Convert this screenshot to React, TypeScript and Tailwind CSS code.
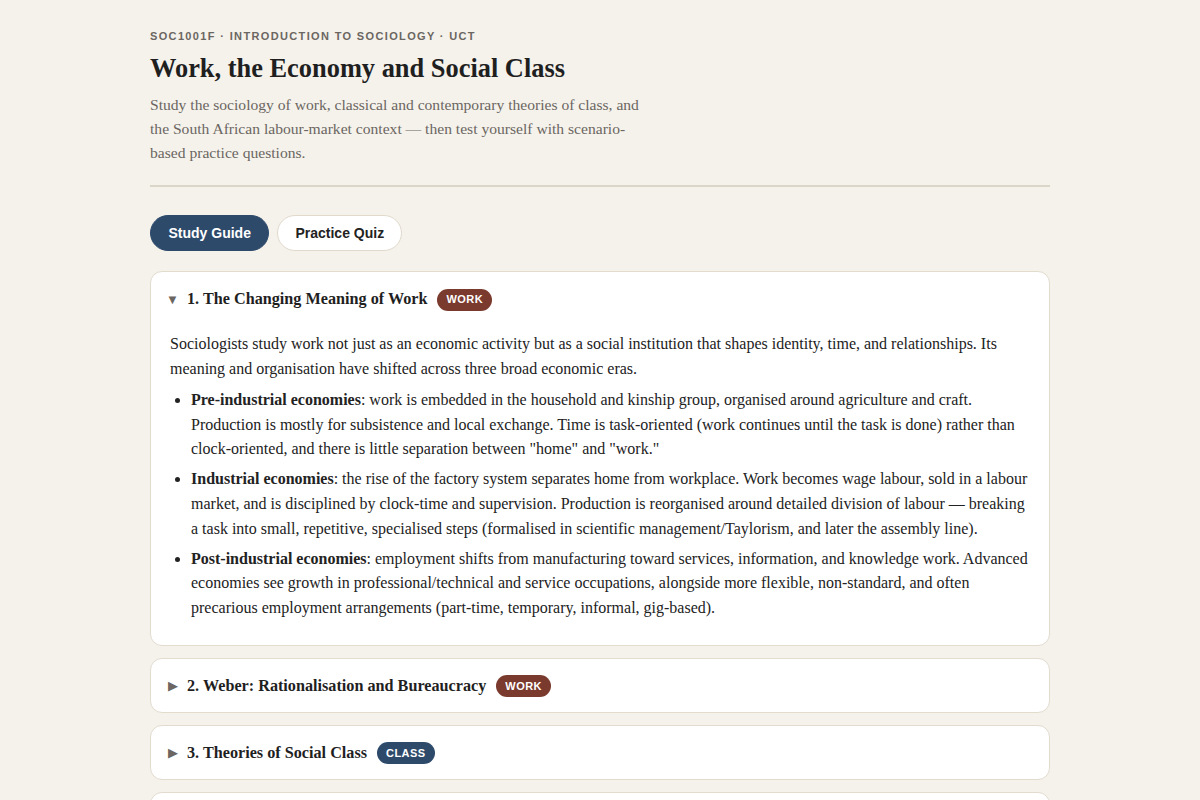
import { useState } from 'react';

type Section = {
  id: number;
  title: string;
  tag: 'WORK' | 'CLASS';
};

const sections: Section[] = [
  { id: 1, title: 'The Changing Meaning of Work', tag: 'WORK' },
  { id: 2, title: 'Weber: Rationalisation and Bureaucracy', tag: 'WORK' },
  { id: 3, title: 'Theories of Social Class', tag: 'CLASS' },
  { id: 4, title: 'Class in South Africa', tag: 'CLASS' },
];

function Tag({ tag }: { tag: Section['tag'] }) {
  const color = tag === 'WORK' ? 'bg-[#7a3a2d]' : 'bg-[#2d4a6b]';
  return (
    <span
      className={`${color} text-white text-[11px] font-bold tracking-[0.04em] px-[9px] h-[22px] inline-flex items-center rounded-full font-['Liberation_Sans',Arial,sans-serif]`}
    >
      {tag}
    </span>
  );
}

function SectionOne() {
  return (
    <div className="px-[19px] pb-[24px] pt-[7px] text-[16px] leading-[24.6px] text-[#222]">
      <p>
        Sociologists study work not just as an economic activity but as a social institution that shapes identity,
        time, and relationships. Its meaning and organisation have shifted across three broad economic eras.
      </p>
      <ul className="list-disc pl-[21px] mt-[7px] space-y-[5.5px] marker:text-[#222]">
        <li>
          <strong>Pre-industrial economies</strong>: work is embedded in the household and kinship group, organised
          around agriculture and craft. Production is mostly for subsistence and local exchange. Time is task-oriented
          (work continues until the task is done) rather than clock-oriented, and there is little separation between
          "home" and "work."
        </li>
        <li>
          <strong>Industrial economies</strong>: the rise of the factory system separates home from workplace. Work
          becomes wage labour, sold in a labour market, and is disciplined by clock-time and supervision. Production is
          reorganised around detailed division of labour — breaking a task into small, repetitive, specialised steps
          (formalised in scientific management/Taylorism, and later the assembly line).
        </li>
        <li>
          <strong>Post-industrial economies</strong>: employment shifts from manufacturing toward services,
          information, and knowledge work. Advanced economies see growth in professional/technical and service
          occupations, alongside more flexible, non-standard, and often precarious employment arrangements (part-time,
          temporary, informal, gig-based).
        </li>
      </ul>
    </div>
  );
}

export default function App() {
  const [tab, setTab] = useState<'guide' | 'quiz'>('guide');
  const [open, setOpen] = useState<number[]>([1]);

  function toggle(id: number) {
    setOpen((prev) => (prev.includes(id) ? prev.filter((x) => x !== id) : [...prev, id]));
  }

  return (
    <div className="min-h-screen bg-[#f5f2ec] font-['Liberation_Serif','Times_New_Roman',serif] text-[#222]">
      <div className="w-[900px] mx-auto pt-[29px] pb-10">
        <header className="pb-5 border-b-2 border-[#dcd5c9]">
          <div className="text-[11px] leading-[14px] font-bold tracking-[0.123em] text-[#6b6661] font-['Liberation_Sans',Arial,sans-serif]">
            SOC1001F · INTRODUCTION TO SOCIOLOGY · UCT
          </div>
          <h1 className="mt-[8px] text-[26.4px] leading-[34px] font-bold text-[#1f1f1f]">
            Work, the Economy and Social Class
          </h1>
          <p className="mt-[8px] max-w-[505px] text-[15.6px] leading-[24px] text-[#6b6661]">
            Study the sociology of work, classical and contemporary theories of class, and the South African
            labour-market context — then test yourself with scenario-based practice questions.
          </p>
        </header>

        <div className="flex gap-2 mt-[28px] mb-5 font-['Liberation_Sans',Arial,sans-serif]">
          <button
            onClick={() => setTab('guide')}
            className={`h-[36px] px-[17.5px] rounded-full text-[14px] font-bold border ${
              tab === 'guide' ? 'bg-[#2d4a6b] border-[#2d4a6b] text-white' : 'bg-white border-[#e0d9cc] text-[#222]'
            }`}
          >
            Study Guide
          </button>
          <button
            onClick={() => setTab('quiz')}
            className={`h-[36px] px-[17px] rounded-full text-[14px] font-bold border ${
              tab === 'quiz' ? 'bg-[#2d4a6b] border-[#2d4a6b] text-white' : 'bg-white border-[#e0d9cc] text-[#222]'
            }`}
          >
            Practice Quiz
          </button>
        </div>

        <div className="flex flex-col gap-3">
          {sections.map((s) => {
            const isOpen = open.includes(s.id);
            return (
              <div key={s.id} className="bg-white border border-[#e2dbce] rounded-[12px]">
                <button
                  onClick={() => toggle(s.id)}
                  className="w-full flex items-center gap-[9px] pl-[16px] pr-5 pt-[2px] h-[53px] text-left"
                >
                  <span className="text-[#6b6661] text-[13px] w-[11px] inline-flex justify-center">
                    {isOpen ? '▼' : '▶'}
                  </span>
                  <span className="text-[16.2px] font-bold text-[#1f1f1f] mr-px">
                    {s.id}. {s.title}
                  </span>
                  <Tag tag={s.tag} />
                </button>
                {isOpen && s.id === 1 && <SectionOne />}
              </div>
            );
          })}
        </div>
      </div>
    </div>
  );
}
